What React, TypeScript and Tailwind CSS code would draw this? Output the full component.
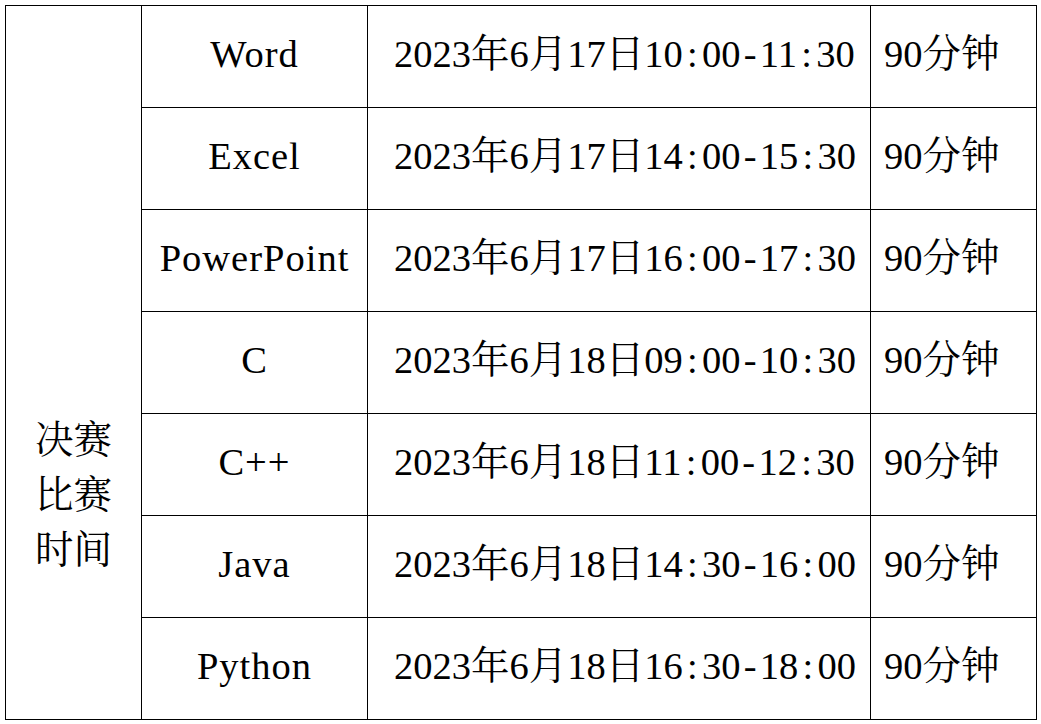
const schedule = [
  { name: "Word", time: "2023年6月17日10:00-11:30" },
  { name: "Excel", time: "2023年6月17日14:00-15:30" },
  { name: "PowerPoint", time: "2023年6月17日16:00-17:30" },
  { name: "C", time: "2023年6月18日09:00-10:30" },
  { name: "C++", time: "2023年6月18日11:00-12:30" },
  { name: "Java", time: "2023年6月18日14:30-16:00" },
  { name: "Python", time: "2023年6月18日16:30-18:00" },
];

// half-width punctuation gets a full 0.5em slot like the original song font
const Half = ({ text }: { text: string }) => (
  <>
    {text.split("").map((ch, i) =>
      ch === ":" || ch === "-" ? (
        <span key={i} className="inline-block w-[0.5em] text-center">
          {ch}
        </span>
      ) : (
        ch
      )
    )}
  </>
);

const App = () => {
  return (
    <div className="w-[1041px] h-[724px] bg-white pt-[5px] pl-[5px] text-black font-['Liberation_Serif','Noto_Serif_CJK_SC','Noto_Sans_CJK_SC',serif] text-[38.5px]">
      <table className="table-fixed border-collapse w-[1031px]">
        <colgroup>
          <col className="w-[136px]" />
          <col className="w-[226px]" />
          <col className="w-[503px]" />
          <col className="w-[166px]" />
        </colgroup>
        <tbody>
          {schedule.map((row, index) => (
            <tr key={row.name} className="h-[102px]">
              {index === 0 && (
                <td rowSpan={7} className="border border-black align-top p-0 pt-[407px]">
                  <div className="mx-auto w-[2em] leading-[55px] text-center">决赛比赛时间</div>
                </td>
              )}
              <td className="border border-black text-center p-0 pb-[4px] whitespace-nowrap tracking-[1px]">
                {row.name}
              </td>
              <td className="border border-black text-left p-0 pl-[26px] pb-[4px] whitespace-nowrap">
                <Half text={row.time} />
              </td>
              <td className="border border-black text-left p-0 pl-[13px] pb-[4px] whitespace-nowrap">90分钟</td>
            </tr>
          ))}
        </tbody>
      </table>
    </div>
  );
};

export default App;
